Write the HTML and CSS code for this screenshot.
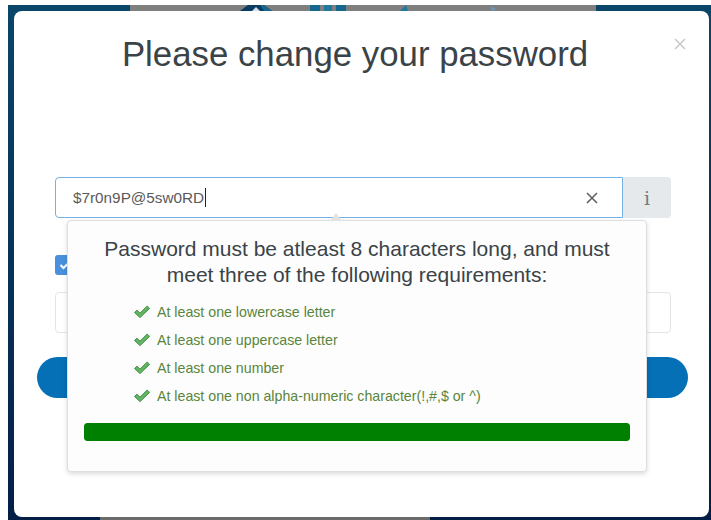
FILE: index.html
```html
<!DOCTYPE html>
<html lang="en">
<head>
<meta charset="utf-8">
<title>Change password</title>
<link rel="stylesheet" href="styles.css">
</head>
<body>
<div class="backdrop">
  <div class="page-strip">
    <svg class="strip-art" width="466" height="6" viewBox="0 0 466 6">
      <polygon points="110,6 126,-6 142,6" fill="#0b3c63"/>
      <polygon points="122,6 126,2 130,6" fill="#d8dde2"/>
      <polygon points="128,-4 142,6 134,6" fill="#16678e"/>
      <rect x="180" y="0" width="10" height="6" fill="#16678e"/>
      <rect x="194" y="0" width="8" height="6" fill="#1f7aa0"/>
      <rect x="206" y="0" width="10" height="6" fill="#16678e"/>
      <polygon points="270,6 276,0 278,6" fill="#1f7aa0"/>
      <circle cx="363" cy="4" r="2" fill="#6d97b5"/>
    </svg>
  </div>

  <div class="modal">
    <button class="modal-close" type="button" aria-label="Close">
      <svg width="12" height="12" viewBox="0 0 12 12"><path d="M1 1L11 11M11 1L1 11" stroke="#c4c4c4" stroke-width="1.3"/></svg>
    </button>

    <h1 class="modal-title">Please change your password</h1>

    <form class="pw-form">
      <div class="input-group">
        <div class="pw-field">
          <span class="pw-value">$7r0n9P@5sw0RD</span><span class="caret"></span>
          <button class="pw-clear" type="button" aria-label="Clear">
            <svg width="12" height="12" viewBox="0 0 12 12"><path d="M1 1L11 11M11 1L1 11" stroke="#5f6368" stroke-width="1.6"/></svg>
          </button>
        </div>
        <span class="addon">i</span>

        <div class="popover">
          <span class="popover-arrow"></span>
          <p class="popover-title">Password must be atleast 8 characters long, and must meet three of the following requirements:</p>
          <ul class="rules">
            <li><svg class="tick" width="18" height="14" viewBox="0 0 18 14"><path d="M1.5 7.5L4 5.2L7 8.2L14.2 1L16.6 3.4L7 12.6Z" fill="#62b562" stroke="#3f8f3f" stroke-width="1" stroke-linejoin="round"/></svg>At least one lowercase letter</li>
            <li><svg class="tick" width="18" height="14" viewBox="0 0 18 14"><path d="M1.5 7.5L4 5.2L7 8.2L14.2 1L16.6 3.4L7 12.6Z" fill="#62b562" stroke="#3f8f3f" stroke-width="1" stroke-linejoin="round"/></svg>At least one uppercase letter</li>
            <li><svg class="tick" width="18" height="14" viewBox="0 0 18 14"><path d="M1.5 7.5L4 5.2L7 8.2L14.2 1L16.6 3.4L7 12.6Z" fill="#62b562" stroke="#3f8f3f" stroke-width="1" stroke-linejoin="round"/></svg>At least one number</li>
            <li><svg class="tick" width="18" height="14" viewBox="0 0 18 14"><path d="M1.5 7.5L4 5.2L7 8.2L14.2 1L16.6 3.4L7 12.6Z" fill="#62b562" stroke="#3f8f3f" stroke-width="1" stroke-linejoin="round"/></svg>At least one non alpha-numeric character(!,#,$ or ^)</li>
          </ul>
          <div class="strength"><div class="strength-fill" style="width:100%"></div></div>
        </div>
      </div>

      <div class="check-row">
        <span class="checkbox">
          <svg width="12" height="10" viewBox="0 0 12 10"><path d="M1.5 5L4.5 8L10.5 2" stroke="#fff" stroke-width="2" fill="none"/></svg>
        </span>
      </div>

      <div class="confirm-field"></div>

      <button class="submit" type="button"></button>
    </form>

    <div class="brand">
      <svg width="26" height="18" viewBox="0 0 26 18">
        <rect x="2" y="8" width="6" height="6" fill="#0b5fa5"/>
        <polygon points="8,12 13,9 18,12 13,14" fill="#0b4f8c"/>
        <rect x="18" y="8" width="6" height="6" fill="#2a9ad6"/>
      </svg>
    </div>
  </div>
  <div class="page-strip-bottom"></div>
</div>
</body>
</html>
```

FILE: styles.css
```css
* {
  box-sizing: border-box;
}

html,
body {
  margin: 0;
  height: 100%;
  background: #fff;
}

body {
  padding: 5px 0 0 8px;
  font-family: "Liberation Sans", Arial, Helvetica, sans-serif;
}

.backdrop {
  height: 515px;
  background: linear-gradient(#0a4669, #062a50 70%, #041f45);
  padding: 0 2px 0 6px;
  display: flex;
  flex-direction: column;
  overflow: hidden;
}

.page-strip {
  flex: none;
  height: 6px;
  width: 466px;
  margin-left: 116px;
  background: #7f7f7f;
}

.strip-art {
  display: block;
}

.modal {
  flex: none;
  position: relative;
  height: 506px;
  background: #fff;
  border-radius: 8px;
  padding: 0 38px 0 41px;
}

.page-strip-bottom {
  height: 3px;
  width: 330px;
  margin-left: 86px;
  background: #6b6b6b;
}

.modal-close {
  position: absolute;
  top: 27px;
  right: 23px;
  border: 0;
  padding: 0;
  background: none;
  line-height: 0;
}

.modal-title {
  margin: 0;
  padding-top: 23px;
  padding-right: 16px;
  text-align: center;
  font-weight: 400;
  font-size: 34.8px;
  line-height: 40px;
  color: #3a4347;
}

.pw-form {
  margin-top: 103px;
  display: flex;
  flex-direction: column;
}

.input-group {
  position: relative;
  display: flex;
  height: 41px;
}

.pw-field {
  flex: 0 0 568px;
  display: flex;
  align-items: center;
  border: 1px solid #74b2e6;
  border-radius: 4px 0 0 4px;
  padding: 0 0 0 17px;
  font-size: 15.3px;
  color: #5a5a5a;
}

.caret {
  width: 1px;
  height: 19px;
  background: #222;
  margin-left: 1px;
}

.pw-clear {
  margin-left: auto;
  margin-right: 24px;
  border: 0;
  padding: 0;
  background: none;
  line-height: 0;
}

.addon {
  flex: 1;
  display: flex;
  align-items: center;
  justify-content: center;
  background: #e6e9eb;
  border-radius: 0 4px 4px 0;
  font-family: "DejaVu Serif", "Liberation Serif", serif;
  font-size: 19px;
  color: #737a80;
}

.popover {
  position: absolute;
  z-index: 2;
  top: 43px;
  left: 12px;
  width: 580px;
  height: 252px;
  background: #fdfdfd;
  border: 1px solid #dedede;
  border-radius: 4px;
  box-shadow: 0 2px 5px rgba(0, 0, 0, 0.14);
  padding: 15px 16px 0 16px;
}

.popover-arrow {
  position: absolute;
  top: -8px;
  left: 262px;
  width: 0;
  height: 0;
  border-left: 6px solid transparent;
  border-right: 6px solid transparent;
  border-bottom: 8px solid #e2e2e2;
}

.popover-title {
  margin: 0 auto;
  width: 540px;
  text-align: center;
  font-size: 21px;
  line-height: 26px;
  color: #3a4347;
}

.rules {
  list-style: none;
  margin: 10px 0 0;
  padding: 0 0 0 49px;
}

.rules li {
  display: flex;
  align-items: center;
  height: 28px;
  font-size: 14.2px;
  color: #5a853c;
}

.tick {
  flex: none;
  margin-right: 6px;
}

.strength {
  margin-top: 13px;
  height: 18px;
  background: #eee;
  border-radius: 3px;
  overflow: hidden;
}

.strength-fill {
  height: 100%;
  background: #008000;
  border-radius: 3px;
}

.check-row {
  margin-top: 37px;
  display: flex;
  align-items: center;
  height: 20px;
}

.checkbox {
  width: 20px;
  height: 20px;
  border-radius: 3px;
  background: #4a90dc;
  display: flex;
  align-items: center;
  justify-content: center;
}

.confirm-field {
  margin-top: 17px;
  height: 41px;
  border: 1px solid #e2e5e8;
  border-radius: 4px;
}

.submit {
  margin: 24px -17px 0 -18px;
  height: 41px;
  border: 0;
  border-radius: 21px;
  background: #0570b5;
}

.brand {
  margin-top: 58px;
  display: flex;
  justify-content: center;
  padding-left: 6px;
}
```
